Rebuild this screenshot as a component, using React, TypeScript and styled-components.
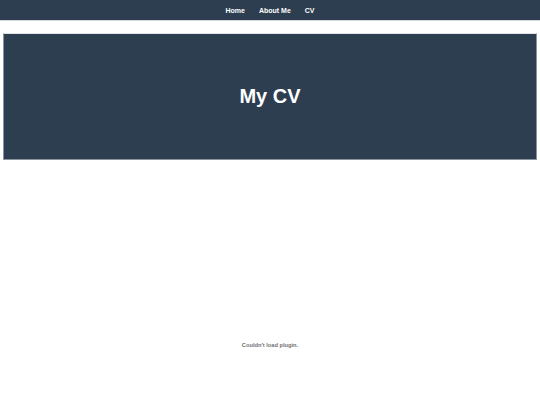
import React from 'react'
import styled, { createGlobalStyle } from 'styled-components'

const GlobalStyle = createGlobalStyle`
  html, body {
    margin: 0;
    padding: 0;
    background: #ffffff;
    font-family: "Liberation Sans", Arial, sans-serif;
  }
`

const Page = styled.div`
  display: flex;
  flex-direction: column;
  height: 405px;
  overflow: hidden;
`

const NavBar = styled.nav`
  height: 20px;
  background: #2c3e50;
  border-bottom: 1px solid #d3d8de;
  display: flex;
  align-items: center;
  justify-content: center;
  gap: 14px;
`

const NavLink = styled.a`
  color: #ffffff;
  font-size: 7px;
  font-weight: bold;
  text-decoration: none;
  line-height: 1;
`

const Main = styled.main`
  padding: 12px 3px 0;
  display: flex;
  flex-direction: column;
`

const Hero = styled.section`
  height: 125px;
  background: #2c3e50;
  border-style: solid;
  border-width: 1px;
  border-color: #e2e6ea #8c959e #8c959e #8c959e;
  display: flex;
  align-items: center;
  justify-content: center;
`

const Title = styled.h1`
  margin: 0;
  color: #ffffff;
  font-size: 20px;
  font-weight: bold;
`

const PluginArea = styled.div`
  padding-top: 182px;
  display: flex;
  justify-content: center;
`

const PluginMessage = styled.span`
  color: #6f6f6f;
  font-size: 5.7px;
  font-weight: 600;
  line-height: 6px;
`

export default function App() {
  return (
    <Page>
      <GlobalStyle />
      <NavBar>
        <NavLink href="#">Home</NavLink>
        <NavLink href="#">About Me</NavLink>
        <NavLink href="#">CV</NavLink>
      </NavBar>
      <Main>
        <Hero>
          <Title>My CV</Title>
        </Hero>
        <PluginArea>
          <PluginMessage>Couldn't load plugin.</PluginMessage>
        </PluginArea>
      </Main>
    </Page>
  )
}
